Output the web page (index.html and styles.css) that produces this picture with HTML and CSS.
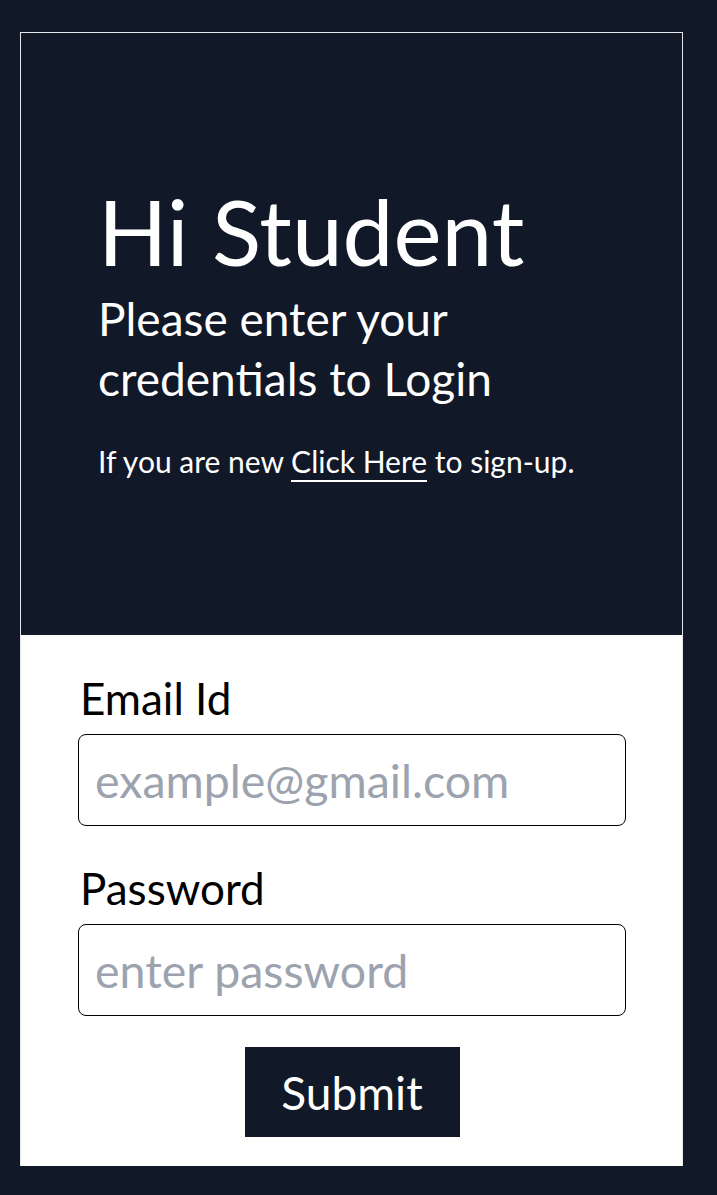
FILE: index.html
```html
<!DOCTYPE html>
<html lang="en">
<head>
<meta charset="utf-8">
<title>Login</title>
<link rel="stylesheet" href="styles.css">
</head>
<body>
<main class="card">
  <section class="hero">
    <h1 class="hero-title">Hi Student</h1>
    <p class="hero-subtitle">Please enter your credentials to Login</p>
    <p class="hero-note">If you are new <a class="hero-link" href="#">Click Here</a> to sign-up.</p>
  </section>
  <form class="login-form">
    <label class="field-label" for="email">Email Id</label>
    <input class="field-input" id="email" type="email" placeholder="example@gmail.com">
    <label class="field-label field-label-second" for="password">Password</label>
    <input class="field-input" id="password" type="password" placeholder="enter password">
    <div class="actions">
      <button class="submit-btn" type="submit">Submit</button>
    </div>
  </form>
</main>
</body>
</html>
```
FILE: styles.css
```css
* { box-sizing: border-box; }
html, body { margin: 0; }
body {
  background: #111827;
  font-family: Lato, "Noto Sans", sans-serif;
  padding: 32px 34px 29px 20px;
}
.card {
  width: 663px;
  border: 1px solid #e5e7eb;
  border-bottom: none;
}
.hero {
  background: #111827;
  color: #fff;
  height: 602px;
  padding: 152px 40px 0 77px;
}
.hero-title {
  margin: 0;
  font-size: 91px;
  line-height: 91px;
  font-weight: 400;
}
.hero-subtitle {
  margin: 13px 0 0;
  font-size: 46px;
  line-height: 60px;
  width: 420px;
}
.hero-note {
  margin: 34px 0 0;
  font-size: 30px;
  line-height: 36px;
}
.hero-link {
  color: #fff;
  text-decoration: none;
  border-bottom: 2px solid #fff;
  padding-bottom: 1px;
}
.login-form {
  background: #fff;
  padding: 37px 56px 29px 57px;
  display: flex;
  flex-direction: column;
}
.field-label {
  display: block;
  font-size: 44px;
  line-height: 52px;
  color: #000;
  padding-left: 2px;
}
.field-label-second { margin-top: 36px; }
.field-input {
  margin-top: 10px;
  height: 92px;
  width: 100%;
  border: 1px solid #000;
  border-radius: 8px;
  padding: 0 16px;
  font-family: inherit;
  font-size: 46.5px;
  color: #111827;
  background: #fff;
  outline: none;
}
.field-input::placeholder { color: #9ca3af; }
.actions {
  display: flex;
  justify-content: center;
  margin-top: 31px;
}
.submit-btn {
  width: 215px;
  height: 90px;
  background: #111827;
  color: #fff;
  border: none;
  font-family: inherit;
  font-size: 46px;
  padding: 0;
}
```
